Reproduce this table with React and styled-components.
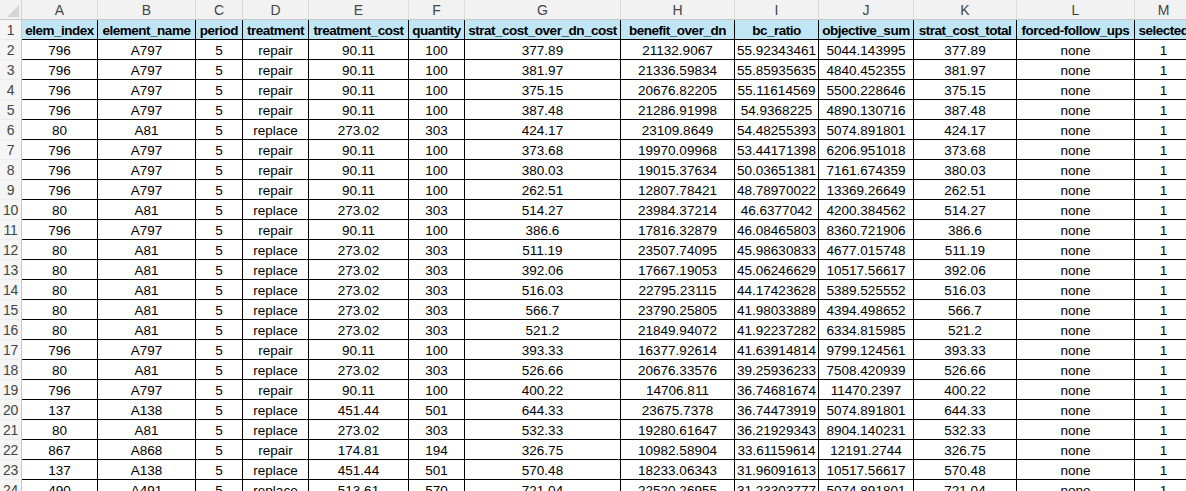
import React from 'react';
import styled, { createGlobalStyle } from 'styled-components';

const GlobalStyle = createGlobalStyle`
  html, body {
    margin: 0;
    padding: 0;
    background: #ffffff;
    overflow: hidden;
  }
  body {
    font-family: "Liberation Sans", Arial, sans-serif;
  }
`

// column widths incl. the 1px right border
const COLS = [22, 76, 98, 47, 66, 100, 56, 156, 114, 84, 95, 103, 118, 58];
const LETTERS = ['A', 'B', 'C', 'D', 'E', 'F', 'G', 'H', 'I', 'J', 'K', 'L', 'M'];
const HEADERS = [
  'elem_index', 'element_name', 'period', 'treatment', 'treatment_cost', 'quantity',
  'strat_cost_over_dn_cost', 'benefit_over_dn', 'bc_ratio', 'objective_sum',
  'strat_cost_total', 'forced-follow_ups', 'selected',
];

const ROWS = [
  [796, 'A797', 5, 'repair', '90.11', 100, '377.89', '21132.9067', '55.92343461', '5044.143995', '377.89'],
  [796, 'A797', 5, 'repair', '90.11', 100, '381.97', '21336.59834', '55.85935635', '4840.452355', '381.97'],
  [796, 'A797', 5, 'repair', '90.11', 100, '375.15', '20676.82205', '55.11614569', '5500.228646', '375.15'],
  [796, 'A797', 5, 'repair', '90.11', 100, '387.48', '21286.91998', '54.9368225', '4890.130716', '387.48'],
  [80, 'A81', 5, 'replace', '273.02', 303, '424.17', '23109.8649', '54.48255393', '5074.891801', '424.17'],
  [796, 'A797', 5, 'repair', '90.11', 100, '373.68', '19970.09968', '53.44171398', '6206.951018', '373.68'],
  [796, 'A797', 5, 'repair', '90.11', 100, '380.03', '19015.37634', '50.03651381', '7161.674359', '380.03'],
  [796, 'A797', 5, 'repair', '90.11', 100, '262.51', '12807.78421', '48.78970022', '13369.26649', '262.51'],
  [80, 'A81', 5, 'replace', '273.02', 303, '514.27', '23984.37214', '46.6377042', '4200.384562', '514.27'],
  [796, 'A797', 5, 'repair', '90.11', 100, '386.6', '17816.32879', '46.08465803', '8360.721906', '386.6'],
  [80, 'A81', 5, 'replace', '273.02', 303, '511.19', '23507.74095', '45.98630833', '4677.015748', '511.19'],
  [80, 'A81', 5, 'replace', '273.02', 303, '392.06', '17667.19053', '45.06246629', '10517.56617', '392.06'],
  [80, 'A81', 5, 'replace', '273.02', 303, '516.03', '22795.23115', '44.17423628', '5389.525552', '516.03'],
  [80, 'A81', 5, 'replace', '273.02', 303, '566.7', '23790.25805', '41.98033889', '4394.498652', '566.7'],
  [80, 'A81', 5, 'replace', '273.02', 303, '521.2', '21849.94072', '41.92237282', '6334.815985', '521.2'],
  [796, 'A797', 5, 'repair', '90.11', 100, '393.33', '16377.92614', '41.63914814', '9799.124561', '393.33'],
  [80, 'A81', 5, 'replace', '273.02', 303, '526.66', '20676.33576', '39.25936233', '7508.420939', '526.66'],
  [796, 'A797', 5, 'repair', '90.11', 100, '400.22', '14706.811', '36.74681674', '11470.2397', '400.22'],
  [137, 'A138', 5, 'replace', '451.44', 501, '644.33', '23675.7378', '36.74473919', '5074.891801', '644.33'],
  [80, 'A81', 5, 'replace', '273.02', 303, '532.33', '19280.61647', '36.21929343', '8904.140231', '532.33'],
  [867, 'A868', 5, 'repair', '174.81', 194, '326.75', '10982.58904', '33.61159614', '12191.2744', '326.75'],
  [137, 'A138', 5, 'replace', '451.44', 501, '570.48', '18233.06343', '31.96091613', '10517.56617', '570.48'],
  [490, 'A491', 5, 'replace', '513.61', 570, '721.04', '22520.26955', '31.23303777', '5074.891801', '721.04'],
];

const Sheet = styled.div`
  display: grid;
  grid-template-columns: ${COLS.map((w) => `${w}px`).join(' ')};
  grid-auto-rows: 20px;
  width: max-content;
`

const Corner = styled.div`
  position: relative;
  background: #f2f2f2;
  border-right: 1px solid #d4d4d4;
  border-bottom: 1px solid #c8c8c8;
  box-sizing: border-box;

  &::after {
    content: '';
    position: absolute;
    right: 2px;
    bottom: 2px;
    width: 12px;
    height: 12px;
    background: #d5d5d5;
    clip-path: polygon(100% 0, 100% 100%, 0 100%);
  }
`

const ColLetter = styled.div`
  box-sizing: border-box;
  background: #f2f2f2;
  border-right: 1px solid #dadada;
  border-bottom: 1px solid #c8c8c8;
  color: #444444;
  font-size: 14px;
  line-height: 19px;
  padding-top: 1px;
  text-align: center;
  overflow: hidden;
`

const RowNum = styled.div`
  box-sizing: border-box;
  background: #f5f5f5;
  border-right: 1px solid #c8c8c8;
  border-bottom: 1px solid #ececec;
  color: #444444;
  font-size: 14px;
  line-height: 19px;
  padding-top: 1px;
  text-align: center;
  letter-spacing: -0.3px;
  overflow: hidden;
`

const Cell = styled.div`
  box-sizing: border-box;
  border-right: 1px solid #000000;
  border-bottom: 1px solid #000000;
  background: ${(p) => (p.$head ? '#c0e6f5' : '#ffffff')};
  color: #000000;
  font-size: 13.5px;
  font-weight: ${(p) => (p.$head ? 700 : 400)};
  letter-spacing: ${(p) => (p.$head ? '-0.5px' : '0')};
  line-height: 19px;
  padding-top: 1px;
  text-align: center;
  white-space: nowrap;
  overflow: hidden;
`

export default function App() {
  return (
    <>
      <GlobalStyle />
      <Sheet>
        <Corner />
        {LETTERS.map((l) => (
          <ColLetter key={l}>{l}</ColLetter>
        ))}

        <RowNum>1</RowNum>
        {HEADERS.map((h) => (
          <Cell key={h} $head>{h}</Cell>
        ))}

        {ROWS.map((row, i) => (
          <React.Fragment key={i}>
            <RowNum>{i + 2}</RowNum>
            {row.map((v, j) => (
              <Cell key={j}>{v}</Cell>
            ))}
            <Cell>none</Cell>
            <Cell>1</Cell>
          </React.Fragment>
        ))}
      </Sheet>
    </>
  );
}
